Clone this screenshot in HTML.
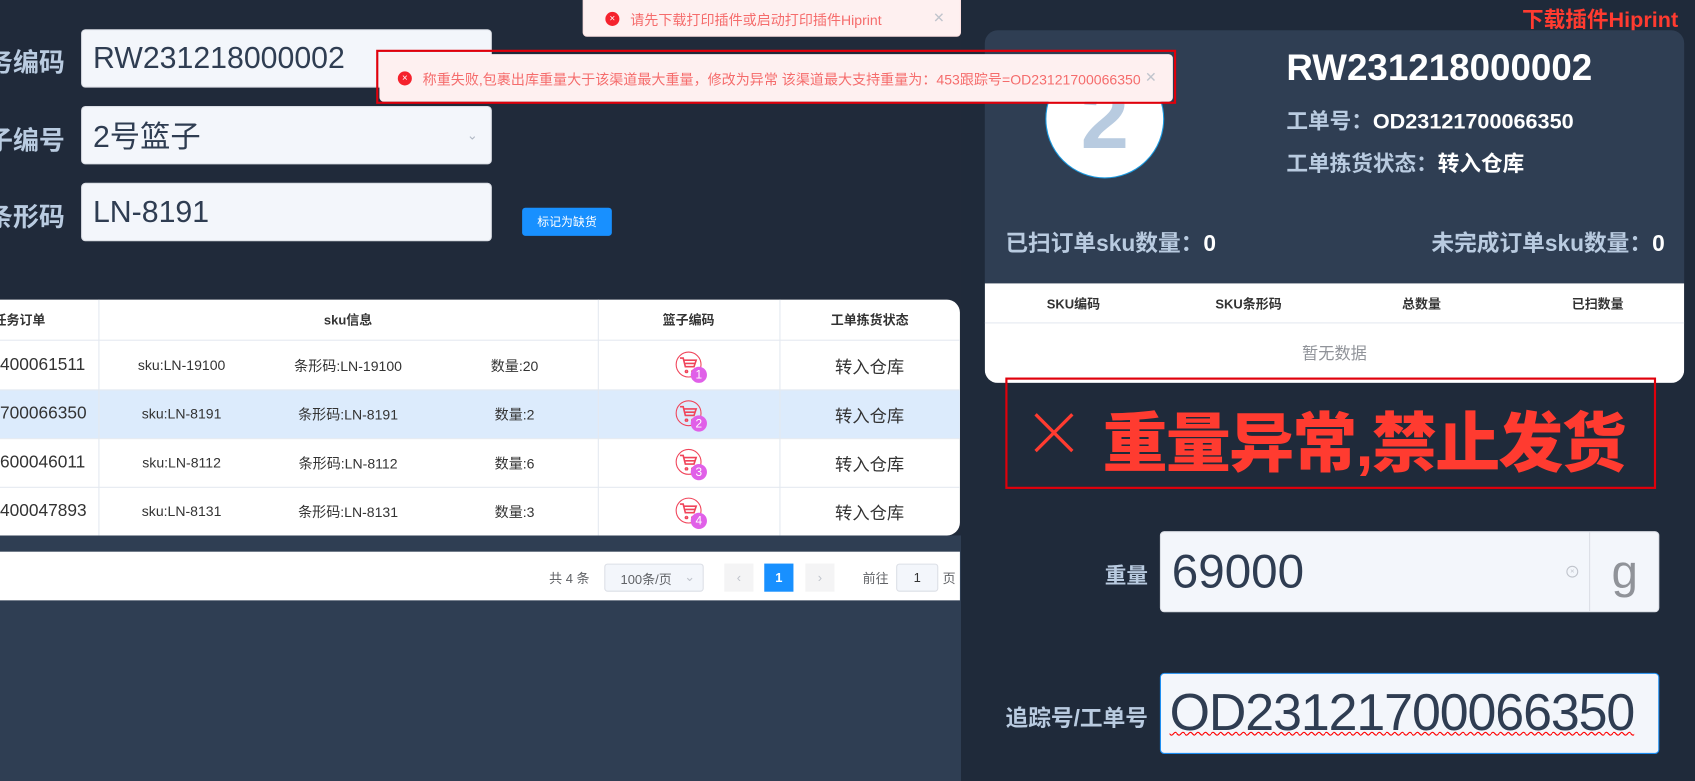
<!DOCTYPE html>
<html><head><meta charset="utf-8"><style>
*{box-sizing:border-box;margin:0;padding:0}
body{width:1695px;height:781px;overflow:hidden;background:#202a3a;font-family:"Liberation Sans","Noto Sans CJK SC",sans-serif}
#s{position:absolute;left:0;top:0;width:1568px;height:722px;transform:scale(1.08099,1.08172);transform-origin:0 0;background:#202a3a;overflow:hidden}
.a{position:absolute}
.lbl{position:absolute;color:#b9cbe0;font-weight:bold;font-size:24px;white-space:nowrap}
.inp{position:absolute;background:#f3f6fb;border-radius:4px;border:1px solid #dcdfe6;color:#2f3d52;font-size:28px;padding-left:10px;display:flex;align-items:center}
.cell{position:absolute;display:flex;align-items:center;justify-content:center;white-space:nowrap}
.vl{position:absolute;top:0;bottom:0;width:1px;background:#e4e9f0}
.hl{position:absolute;left:0;right:0;height:1px;background:#e4e9f0}
.cart{position:absolute;width:24px;height:24px;border:1.5px solid #f0445a;border-radius:50%}
.cart svg{position:absolute;left:2px;top:3px}
.badge{position:absolute;width:15px;height:15px;border-radius:50%;background:#e060e8;color:#fff;font-size:11px;display:flex;align-items:center;justify-content:center}
</style></head><body><div id="s">
<div class="a" style="left:0;top:495px;width:889px;height:227px;background:#2f3e53"></div>

<div class="lbl" style="left:-12px;top:38px">务编码</div>
<div class="lbl" style="left:-12px;top:110px">子编号</div>
<div class="lbl" style="left:-12px;top:181px">条形码</div>
<div class="inp" style="left:75px;top:27px;width:380px;height:54px">RW231218000002</div>
<div class="inp" style="left:75px;top:98px;width:380px;height:54px">2号篮子<span style="position:absolute;right:12px;font-size:12px;color:#b0b8c4">&#8964;</span></div>
<div class="inp" style="left:75px;top:169px;width:380px;height:54px">LN-8191</div>
<div class="a" style="left:483px;top:192px;width:83px;height:26px;background:#1890ff;border-radius:3px;color:#fff;font-size:11px;display:flex;align-items:center;justify-content:center">标记为缺货</div>

<!-- table -->
<div class="a" style="left:0;top:277px;width:888px;height:218px;background:#fff;border-radius:0 12px 12px 0;overflow:hidden;font-size:13px;color:#333">
 <div class="a" style="left:0;top:83px;width:888px;height:45px;background:#dcebfc"></div>
 <div class="hl" style="top:37px"></div><div class="hl" style="top:83px"></div><div class="hl" style="top:128px"></div><div class="hl" style="top:173px"></div>
 <div class="vl" style="left:91px"></div><div class="vl" style="left:553px"></div><div class="vl" style="left:721px"></div>
 <div class="cell" style="left:-6px;top:0;width:60px;height:37px;justify-content:flex-start;font-weight:bold;font-size:12px">任务订单</div>
 <div class="cell" style="left:91px;top:0;width:462px;height:37px;font-weight:bold;font-size:12px">sku信息</div>
 <div class="cell" style="left:553px;top:0;width:168px;height:37px;font-weight:bold;font-size:12px">篮子编码</div>
 <div class="cell" style="left:721px;top:0;width:167px;height:37px;font-weight:bold;font-size:12px">工单拣货状态</div>
</div>

<!-- pagination -->
<div class="a" style="left:0;top:510px;width:888px;height:45px;background:#fff;font-size:12px;color:#606266">
 <div class="a" style="left:508px;top:16px">共 4 条</div>
 <div class="a" style="left:559px;top:11px;width:92px;height:26px;border:1px solid #dcdfe6;background:#f3f6fb;border-radius:3px;padding:5px 0 0 14px">100条/页<span style="position:absolute;right:7px;top:4px;color:#c0c4cc">&#8964;</span></div>
 <div class="a" style="left:670px;top:11px;width:27px;height:26px;background:#f4f4f5;color:#c0c4cc;text-align:center;line-height:26px">&lsaquo;</div>
 <div class="a" style="left:707px;top:11px;width:27px;height:26px;background:#1890ff;color:#fff;text-align:center;line-height:26px;font-weight:bold">1</div>
 <div class="a" style="left:745px;top:11px;width:27px;height:26px;background:#f4f4f5;color:#c0c4cc;text-align:center;line-height:26px">&rsaquo;</div>
 <div class="a" style="left:798px;top:16px">前往</div>
 <div class="a" style="left:829px;top:11px;width:39px;height:26px;border:1px solid #dcdfe6;background:#f3f6fb;border-radius:3px;text-align:center;line-height:24px;color:#333">1</div>
 <div class="a" style="left:872px;top:16px">页</div>
</div>

<!-- right -->
<div class="a" style="left:889px;top:0;width:679px;height:722px;background:#1f2a3a"></div>
<div class="a" style="left:1408px;top:2px;color:#ff3b30;font-weight:bold;font-size:20px;white-space:nowrap">下载插件Hiprint</div>
<div class="a" style="left:911px;top:28px;width:647px;height:326px;background:#2f3e53;border-radius:12px;overflow:hidden">
 <div class="a" style="left:56px;top:27px;width:110px;height:110px;border-radius:50%;background:#fff;border:1px solid #1b9ae0;color:#b8cbe0;font-size:80px;font-weight:bold;text-align:center;line-height:108px">2</div>
 <div class="a" style="left:279px;top:16px;color:#fff;font-weight:bold;font-size:34px">RW231218000002</div>
 <div class="a" style="left:279px;top:68px;color:#b9cbe0;font-weight:bold;font-size:20px;white-space:nowrap">工单号：<span style="color:#fff">OD23121700066350</span></div>
 <div class="a" style="left:279px;top:107px;color:#b9cbe0;font-weight:bold;font-size:20px;white-space:nowrap">工单拣货状态：<span style="color:#fff">转入仓库</span></div>
 <div class="a" style="left:19px;top:181px;color:#b9cbe0;font-weight:bold;font-size:21px;white-space:nowrap">已扫订单sku数量：<span style="color:#fff">0</span></div>
 <div class="a" style="right:18px;top:181px;color:#b9cbe0;font-weight:bold;font-size:21px;white-space:nowrap">未完成订单sku数量：<span style="color:#fff">0</span></div>
 <div class="a" style="left:0;top:234px;width:647px;height:92px;background:#fff;font-size:12px;font-weight:bold;color:#333">
  <div class="hl" style="top:36px"></div>
  <div class="cell" style="left:2px;top:0;width:160px;height:36px">SKU编码</div>
  <div class="cell" style="left:164px;top:0;width:160px;height:36px">SKU条形码</div>
  <div class="cell" style="left:324px;top:0;width:160px;height:36px">总数量</div>
  <div class="cell" style="left:487px;top:0;width:160px;height:36px">已扫数量</div>
  <div class="cell" style="left:0;top:37px;width:647px;height:55px;font-weight:normal;color:#909399;font-size:15px">暂无数据</div>
 </div>
</div>

<div class="a" style="left:930px;top:349px;width:602px;height:103px;border:2px solid #e0000b"></div>
<svg class="a" style="left:955px;top:380px" width="40" height="40"><path d="M3 3L37 37M37 3L3 37" stroke="#ff3b30" stroke-width="3"/></svg>
<div class="a" style="left:1020px;top:362px;color:#ff3b30;font-weight:900;font-size:60px;white-space:nowrap;letter-spacing:-1.5px">重量异常,禁止发货</div>

<div class="lbl" style="right:506px;top:516px;font-size:20px">重量</div>
<div class="inp" style="left:1073px;top:491px;width:462px;height:75px;font-size:44px">69000
 <span style="position:absolute;right:74px;top:31px;width:11px;height:11px;border:1px solid #c0c4cc;border-radius:50%;font-size:7px;color:#c0c4cc;line-height:9px;text-align:center">×</span>
 <div class="a" style="left:396px;top:0;width:65px;height:73px;border-left:1px solid #dcdfe6;color:#909399;display:flex;align-items:center;justify-content:center;font-size:44px">g</div>
</div>
<div class="lbl" style="right:506px;top:648px;font-size:21px">追踪号/工单号</div>
<div class="inp" style="left:1073px;top:622px;width:462px;height:75px;font-size:48px;border-color:#1b8cf0;padding-left:8px;letter-spacing:-1px;overflow:hidden"><span style="text-decoration:underline wavy #f00;text-decoration-thickness:1px;white-space:nowrap">OD23121700066350</span></div>

<!-- toasts -->
<div class="a" style="left:539px;top:-4px;width:350px;height:38px;background:#fef0f0;border:1px solid #fde2e2;border-radius:4px;color:#f56c6c;font-size:13px;display:flex;align-items:center;padding-left:20px;padding-top:4px">
 <span style="width:13px;height:13px;border-radius:50%;background:#f5222d;color:#fff;font-size:9px;display:inline-flex;align-items:center;justify-content:center;margin-right:10px">×</span>请先下载打印插件或启动打印插件Hiprint<span style="position:absolute;right:14px;color:#c0c4cc">✕</span></div>
<div class="a" style="left:348px;top:46px;width:740px;height:50px;border:2px solid #e0000b"></div>
<div class="a" style="left:351px;top:50px;width:734px;height:44px;background:#fef0f0;border-radius:4px;color:#f56c6c;font-size:13px;display:flex;align-items:center;padding-left:17px;white-space:nowrap">
 <span style="width:13px;height:13px;border-radius:50%;background:#f5222d;color:#fff;font-size:9px;display:inline-flex;align-items:center;justify-content:center;margin-right:10px">×</span>称重失败,包裹出库重量大于该渠道最大重量，修改为异常 该渠道最大支持重量为：453跟踪号=OD23121700066350<span style="color:#c0c4cc;margin-left:4px">✕</span></div>

<!-- rows -->
<div class="a" style="left:0;top:315px;width:888px;font-size:13px;color:#333">
 <div class="a" style="top:0;left:0;width:888px;height:45px">
  <div class="cell" style="left:0;height:45px;font-size:16px">400061511</div>
  <div class="cell" style="left:91px;width:154px;height:45px">sku:LN-19100</div>
  <div class="cell" style="left:245px;width:154px;height:45px">条形码:LN-19100</div>
  <div class="cell" style="left:399px;width:154px;height:45px">数量:20</div>
  <div class="cart" style="left:625px;top:10px"><svg width="18" height="16" viewBox="0 0 18 16"><path d="M1 2h3l2 8h8l2-6H5M7 13.5a1 1 0 1 0 0.1 0M13 13.5a1 1 0 1 0 0.1 0M6 7h9" fill="none" stroke="#f0445a" stroke-width="1.5"/></svg></div><div class="badge" style="left:639px;top:24px">1</div>
  <div class="cell" style="left:721px;width:167px;height:45px;font-size:16px">转入仓库</div>
 </div>
 <div class="a" style="top:45px;left:0;width:888px;height:45px">
  <div class="cell" style="left:0;height:45px;font-size:16px">700066350</div>
  <div class="cell" style="left:91px;width:154px;height:45px">sku:LN-8191</div>
  <div class="cell" style="left:245px;width:154px;height:45px">条形码:LN-8191</div>
  <div class="cell" style="left:399px;width:154px;height:45px">数量:2</div>
  <div class="cart" style="left:625px;top:10px"><svg width="18" height="16" viewBox="0 0 18 16"><path d="M1 2h3l2 8h8l2-6H5M7 13.5a1 1 0 1 0 0.1 0M13 13.5a1 1 0 1 0 0.1 0M6 7h9" fill="none" stroke="#f0445a" stroke-width="1.5"/></svg></div><div class="badge" style="left:639px;top:24px">2</div>
  <div class="cell" style="left:721px;width:167px;height:45px;font-size:16px">转入仓库</div>
 </div>
 <div class="a" style="top:90px;left:0;width:888px;height:45px">
  <div class="cell" style="left:0;height:45px;font-size:16px">600046011</div>
  <div class="cell" style="left:91px;width:154px;height:45px">sku:LN-8112</div>
  <div class="cell" style="left:245px;width:154px;height:45px">条形码:LN-8112</div>
  <div class="cell" style="left:399px;width:154px;height:45px">数量:6</div>
  <div class="cart" style="left:625px;top:10px"><svg width="18" height="16" viewBox="0 0 18 16"><path d="M1 2h3l2 8h8l2-6H5M7 13.5a1 1 0 1 0 0.1 0M13 13.5a1 1 0 1 0 0.1 0M6 7h9" fill="none" stroke="#f0445a" stroke-width="1.5"/></svg></div><div class="badge" style="left:639px;top:24px">3</div>
  <div class="cell" style="left:721px;width:167px;height:45px;font-size:16px">转入仓库</div>
 </div>
 <div class="a" style="top:135px;left:0;width:888px;height:45px">
  <div class="cell" style="left:0;height:45px;font-size:16px">400047893</div>
  <div class="cell" style="left:91px;width:154px;height:45px">sku:LN-8131</div>
  <div class="cell" style="left:245px;width:154px;height:45px">条形码:LN-8131</div>
  <div class="cell" style="left:399px;width:154px;height:45px">数量:3</div>
  <div class="cart" style="left:625px;top:10px"><svg width="18" height="16" viewBox="0 0 18 16"><path d="M1 2h3l2 8h8l2-6H5M7 13.5a1 1 0 1 0 0.1 0M13 13.5a1 1 0 1 0 0.1 0M6 7h9" fill="none" stroke="#f0445a" stroke-width="1.5"/></svg></div><div class="badge" style="left:639px;top:24px">4</div>
  <div class="cell" style="left:721px;width:167px;height:45px;font-size:16px">转入仓库</div>
 </div>
</div>
</div></body></html>
